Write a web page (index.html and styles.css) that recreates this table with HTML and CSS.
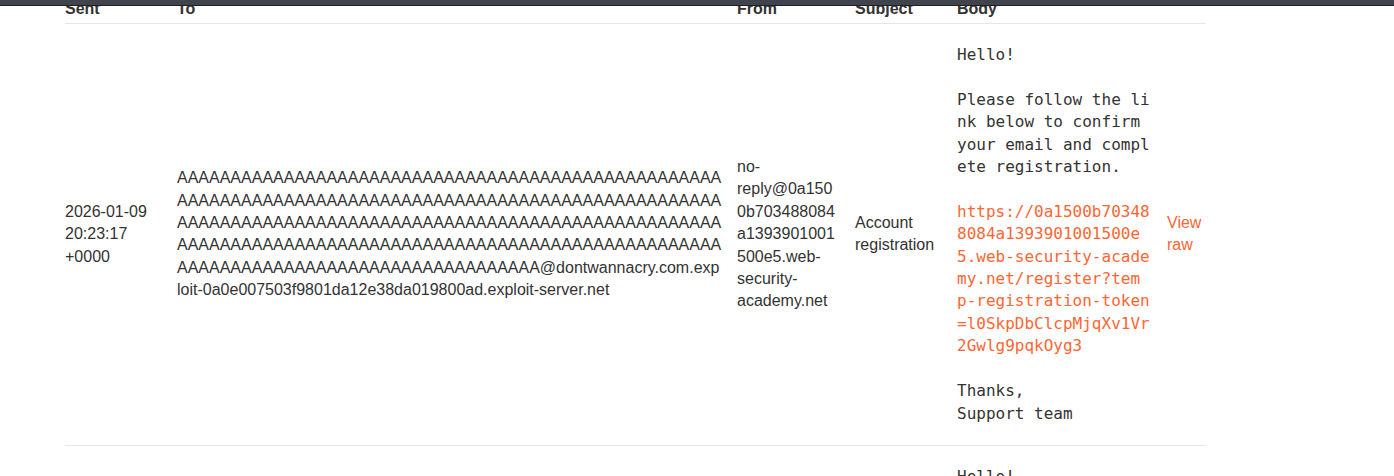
FILE: index.html
```html
<!DOCTYPE html>
<html lang="en">

<head>
    <meta charset="UTF-8">
    <title>Exploit Server: Email client</title>
    <link rel="stylesheet" href="styles.css">
</head>

<body>
    <div class="top-bar"></div>
    <main>
        <table class="emails">
            <thead>
                <tr>
                    <th class="col-sent">Sent</th>
                    <th class="col-to">To</th>
                    <th class="col-from">From</th>
                    <th class="col-subject">Subject</th>
                    <th class="col-body">Body</th>
                    <th class="col-raw"></th>
                </tr>
            </thead>
            <tbody>
                <tr>
                    <td>2026-01-09 20:23:17 +0000</td>
                    <td>AAAAAAAAAAAAAAAAAAAAAAAAAAAAAAAAAAAAAAAAAAAAAAAAAAAAAAAAAAAAAAAAAAAAAAAAAAAAAAAAAAAAAAAAAAAAAAAAAAAAAAAAAAAAAAAAAAAAAAAAAAAAAAAAAAAAAAAAAAAAAAAAAAAAAAAAAAAAAAAAAAAAAAAAAAAAAAAAAAAAAAAAAAAAAAAAAAAAAAAAAAAAAAAAAAAAAAAAAAAAAAAAAAAAAAAAAAAAAA@dontwannacry.com.exploit-0a0e007503f9801da12e38da019800ad.exploit-server.net</td>
                    <td>no-reply@0a1500b703488084a1393901001500e5.web-security-academy.net</td>
                    <td>Account registration</td>
                    <td class="body">Hello!

Please follow the link below to confirm your email and complete registration.

<a href="#">https://0a1500b703488084a1393901001500e5.web-security-academy.net/register?tem<span class="nowrap">p-</span>registration-token=l0SkpDbClcpMjqXv1Vr2Gwlg9pqkOyg3</a>

Thanks,
Support team</td>
                    <td><a href="#">View raw</a></td>
                </tr>
                <tr>
                    <td>2026-01-09 20:21:02 +0000</td>
                    <td>attacker@exploit-0a0e007503f9801da12e38da019800ad.exploit-server.net</td>
                    <td>no-reply@0a1500b703488084a1393901001500e5.web-security-academy.net</td>
                    <td>Account registration</td>
                    <td class="body">Hello!

Please follow the link below to confirm your email and complete registration.

<a href="#">https://0a1500b703488084a1393901001500e5.web-security-academy.net/register?tem<span class="nowrap">p-</span>registration-token=x7HqWmPzRt3Lk9NcVb2Yd5Fs8Gj1QaEu</a>

Thanks,
Support team</td>
                    <td><a href="#">View raw</a></td>
                </tr>
            </tbody>
        </table>
    </main>
</body>

</html>
```

FILE: styles.css
```css
body {
    margin: 0;
    font-family: "Liberation Sans", Arial, sans-serif;
    font-size: 16px;
    color: #333332;
    background: #fff;
}

.top-bar {
    position: fixed;
    top: 0;
    left: 0;
    right: 0;
    height: 5px;
    background-color: #41444d;
    border-bottom: 1px solid #1e1f23;
    z-index: 10;
}

main {
    padding: 0 0 0 65px;
}

.emails {
    table-layout: fixed;
    border-collapse: collapse;
    width: 1141px;
    margin-top: -2px;
}

.emails th,
.emails td {
    box-sizing: border-box;
    text-align: left;
    padding: 0 15px 0 0;
    overflow-wrap: break-word;
}

.emails th {
    font-weight: bold;
    line-height: 22px;
    padding-bottom: 3px;
    border-bottom: 1px solid #e6e6e6;
}

.emails td {
    line-height: 22.4px;
    padding-top: 20px;
    padding-bottom: 20px;
    vertical-align: middle;
    border-top: 1px solid #e6e6e6;
}

.emails th:last-child,
.emails td:last-child {
    padding-right: 0;
}

.col-sent { width: 112px; }
.col-to { width: 560px; }
.col-from { width: 118px; }
.col-subject { width: 102px; }
.col-body { width: 210px; }
.col-raw { width: 39px; }

.emails td.body {
    font-family: "DejaVu Sans Mono", monospace;
    white-space: pre-wrap;
    word-break: break-all;
}

.emails td.body .nowrap {
    white-space: nowrap;
}

.emails a {
    color: #ff6633;
    text-decoration: none;
}
```
